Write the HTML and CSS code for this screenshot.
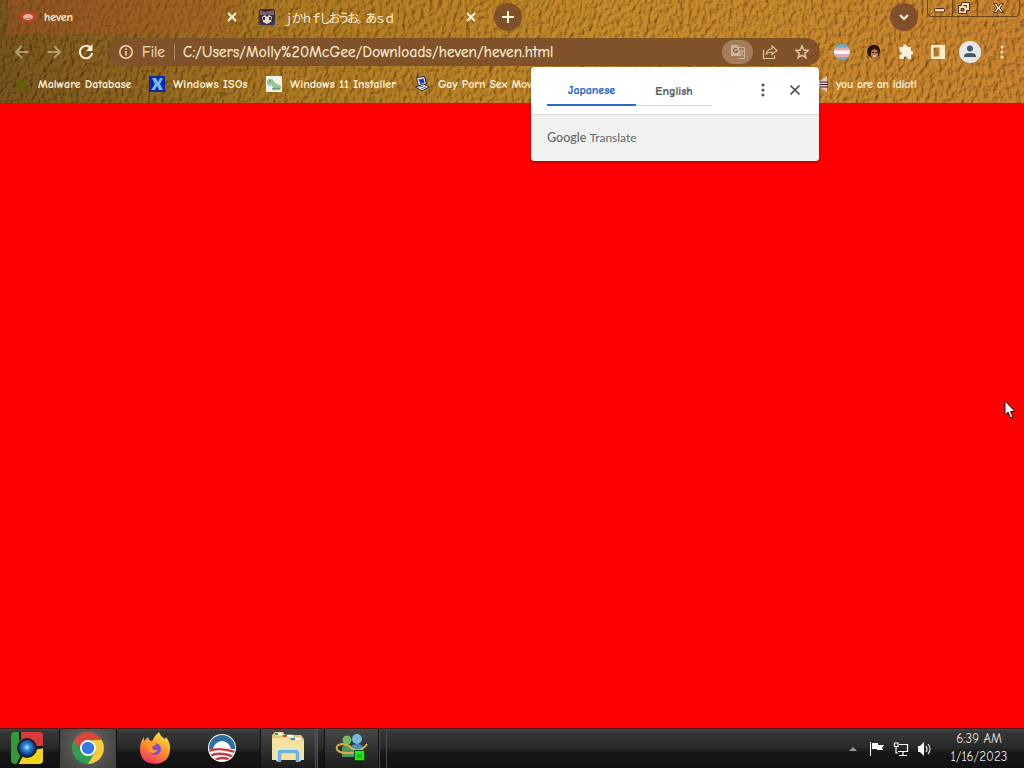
FILE: index.html
```html
<!DOCTYPE html>
<html lang="en">
<head>
    <meta charset="UTF-8">
    <title>heven</title>
    <link rel="stylesheet" href="styles.css">
</head>
<body>
    <div class="desktop">
        <header class="chrome">
            <!-- leather theme -->
            <svg class="leather" width="1024" height="103">
                <defs>
                    <filter id="leather" x="0" y="0" width="100%" height="100%" color-interpolation-filters="sRGB">
                        <feTurbulence type="fractalNoise" baseFrequency="0.22 0.17" numOctaves="3" seed="11" result="noise"/>
                        <feDiffuseLighting in="noise" surfaceScale="1.5" diffuseConstant="1.08" lighting-color="#fff" result="light">
                            <feDistantLight azimuth="215" elevation="62"/>
                        </feDiffuseLighting>
                        <feBlend in="SourceGraphic" in2="light" mode="multiply"/>
                    </filter>
                    <linearGradient id="tan">
                        <stop offset="0" stop-color="#7a551c"/>
                        <stop offset="0.12" stop-color="#8f6420"/>
                        <stop offset="0.28" stop-color="#b07a22"/>
                        <stop offset="0.6" stop-color="#c88c2b"/>
                        <stop offset="1" stop-color="#cc862f"/>
                    </linearGradient>
                </defs>
                <rect width="1024" height="103" fill="url(#tan)" filter="url(#leather)"/>
            </svg>

            <div class="tabs">
                <div class="tab active">
                    <svg class="favicon" viewBox="0 0 16 16"><path d="M0 8q1-5 8-5t8 5q-1 5-8 5T0 8z" fill="#c83e28"/><ellipse cx="8" cy="8" rx="5" ry="3" fill="#dcb9a0"/><path d="M5 10q3-2 6 0" fill="none" stroke="#a8705c"/></svg>
                    <span class="tab-title heven">heven</span>
                    <svg class="close" viewBox="0 0 10 10"><path d="M1 1l8 8M9 1l-8 8"/></svg>
                </div>
                <div class="tab">
                    <svg class="favicon" viewBox="0 0 16 16"><rect width="16" height="16" rx="2" fill="#3c2b3b"/><path d="M1 1l4 2 6-1 4-1v5H1z" fill="#76636c"/><path d="M3 8l3-2 2 2 2-2 3 2-1 5-4 2-4-2z" fill="#ead8d5"/><path d="M4 8h2v3H4zM10 8h2v3h-2z" fill="#283052"/><path d="M7 5l1 3 1-4" fill="#4c3643"/><path d="M0 11l4 5H0M16 11l-4 5h4" fill="#37406b"/></svg>
                    <span class="tab-title jp">ｊかｈｆしおうお。あｓｄ</span>
                    <svg class="close" viewBox="0 0 10 10"><path d="M1 1l8 8M9 1l-8 8"/></svg>
                </div>
                <div class="round new-tab"><svg width="12" height="12"><path d="M6 0v12M0 6h12" stroke="#fff4e0" stroke-width="2"/></svg></div>
                <div class="round tab-search"><svg width="10" height="7"><path d="M1 1l4 4 4-4" fill="none" stroke="#fff4e0" stroke-width="2"/></svg></div>
                <div class="window-buttons">
                    <svg width="97" height="17">
                        <path d="M.5 0v13q0 3.500 3.500 3.500h85q3.500 0 3.500-3.500V0M25.500 0v16M50.500 0v16" fill="none" stroke="#6d4218"/>
                        <rect x="7.500" y="8.500" width="10" height="3.500" rx="1" fill="#ffd9b0" stroke="#4c3024"/>
                        <path d="M34.500 2.500h8v8h-3v3h-8v-8h3z" fill="#ffe1b6" stroke="#4c3024"/>
                        <path d="M36.500 5.500h3v2M34 8.500h3v2.500h-3z" fill="#b77b32" stroke="#4c3024"/>
                        <path d="M66.500 3.500h3l2 3 2-3h3l-3.500 4.500 3.500 4.500h-3l-2-3-2 3h-3L70 8z" fill="#ffe1b6" stroke="#4c3024"/>
                    </svg>
                </div>
            </div>

            <div class="toolbar">
                <svg class="nav dim" viewBox="0 0 16 16"><path d="M14.500 8H2.500M8 2L2 8l6 6"/></svg>
                <svg class="nav dim" viewBox="0 0 16 16"><path d="M1.500 8h12M8 2l6 6-6 6"/></svg>
                <svg class="nav" viewBox="0 0 16 16"><path d="M12.500 3.700A6.200 6.200 0 1 0 14.200 9"/><path d="M14.500 0v7H8z" fill="#fff1d8" stroke="none"/></svg>
                <div class="address">
                    <svg class="info" viewBox="0 0 14 14"><circle cx="7" cy="7" r="6.200" fill="none" stroke="#f1d8b6" stroke-width="1.500"/><path d="M7 6v4.500M7 3.300v1.600" stroke="#f1d8b6" stroke-width="1.600"/></svg>
                    <span class="scheme">File</span>
                    <span class="url">C:/Users/Molly%20McGee/Downloads/heven/heven.html</span>
                    <span class="translate-icon">
                        <svg width="16" height="16" viewBox="0 0 16 16"><path d="M6.500 3.500h8v11h-6" fill="none" stroke="#c9b49a"/><path d="M1 1h7l3 11H1z" fill="#c9b49a"/><path d="M7 5a2 2 0 1 0 .5 2H5.500" fill="none" stroke="#84644b" stroke-width="1.200"/><path d="M9.500 7h4M11.500 6v1M13 7q-1 3-3 4M10.500 8.500q1 2 3 3" fill="none" stroke="#c9b49a"/></svg>
                    </span>
                    <svg class="share" viewBox="0 0 16 16"><path d="M1.500 5.500v9h11v-3" fill="none"/><path d="M4 10.500q1-5.500 6-5.500V2l5 4.500-5 4V8q-4 0-6 2.500z" fill="none"/></svg>
                    <svg class="star" viewBox="0 0 16 16"><path d="M8 2l1.800 4 4.300.4-3.300 2.900 1 4.300L8 11.300l-3.800 2.300 1-4.300-3.300-2.900L6.200 6z" fill="none"/></svg>
                </div>
                <div class="extensions">
                    <svg viewBox="0 0 16 16"><defs><clipPath id="ball"><circle cx="8" cy="8" r="8"/></clipPath></defs><g clip-path="url(#ball)"><rect width="16" height="16" fill="#63b0d0"/><rect y="3.500" width="16" height="9.500" fill="#e8a6ae"/><rect y="6.500" width="16" height="3.500" fill="#fff"/></g></svg>
                    <svg viewBox="0 0 16 16"><path d="M2 11Q0 6 3 3t6-2q5 1 5 6l-1 5-3 2H6z" fill="#26120d"/><ellipse cx="8.500" cy="10" rx="3.700" ry="5" fill="#bd7450"/><path d="M5 7q2-3 7-1l-1-3H6z" fill="#331913"/><path d="M6 8.500h2M9.500 8.500h2" stroke="#321811"/><path d="M7 12h3" stroke="#fff0e0" stroke-width="1.200"/></svg>
                    <svg viewBox="0 0 16 16"><path d="M1.500 3H5v-.5a2 2 0 0 1 4 0V3h4v4h.5a1.800 1.800 0 0 1 0 3.600H13V15H9.500v-.5a2 2 0 0 0-4 0v.5h-4v-4H2a1.800 1.800 0 0 0 0-3.600h-.5z" fill="#fff0df"/></svg>
                    <svg viewBox="0 0 16 16"><path d="M1 1h14v14H1zM3.500 3.500v9h6v-9z" fill="#ffebc8" fill-rule="evenodd"/></svg>
                    <svg class="avatar" viewBox="0 0 22 22"><circle cx="11" cy="11" r="11" fill="#e5e7e8"/><circle cx="11" cy="7.500" r="3" fill="#44556d"/><path d="M5 16v-1q0-3 6-3t6 3v1z" fill="#44556d"/></svg>
                    <svg viewBox="0 0 16 16"><g fill="#ffe4b8"><circle cx="8" cy="3" r="1.500"/><circle cx="8" cy="8" r="1.500"/><circle cx="8" cy="13" r="1.500"/></g></svg>
                </div>
            </div>

            <div class="bookmarks">
                <div class="bookmark malware">
                    <svg viewBox="0 0 16 16"><path d="M8 2l2 4 4-1-2 4 3 5H1l2-5-1-4 4 1z" fill="#5d6209" opacity=".75"/></svg>
                    <span>Malware Database</span>
                </div>
                <div class="bookmark isos">
                    <svg viewBox="0 0 16 16"><rect width="16" height="16" fill="#0929a6"/><path d="M3 2h4l2 4 2-4h3l-3 6 3 6h-4L8 10l-2 4H2l4-6z" fill="#74b5f5"/></svg>
                    <span>Windows ISOs</span>
                </div>
                <div class="bookmark installer">
                    <svg viewBox="0 0 16 16"><rect width="16" height="16" fill="#eff1e6"/><path d="M1 5q3-4 6-1l2 3 4 2q3 1 2 4H6q2-2-1-4l-4-1z" fill="#9cc293"/><path d="M3 5h2M6 13h8" stroke="#39794f"/><path d="M1 8h4v2H2" fill="#b3cbe0"/></svg>
                    <span>Windows 11 Installer</span>
                </div>
                <div class="bookmark movies">
                    <svg viewBox="0 0 16 16"><path d="M2.500 1.500l8-1 2 7-8 3z" fill="#e9e7db" stroke="#25253a"/><path d="M4.500 3.500l5-1 1 4-4 1.500z" fill="#163bc1"/><path d="M1.500 11l8-3 5.500 3-7 4z" fill="#eeecdf" stroke="#25253a"/><path d="M4.500 11l5-1M7 13l5-2" stroke="#656579"/></svg>
                    <span>Gay Porn Sex Mov</span>
                </div>
                <div class="bookmark idiot">
                    <svg viewBox="0 0 16 16"><path d="M4 6l5-2 6-4v16l-6-4-5-2z" fill="#e9c7bb"/><path d="M8 6h8M8 8.500h8M8 11h8" stroke="#35213f" stroke-width="1.200"/></svg>
                    <span>you are an idiot!</span>
                </div>
            </div>
        </header>

        <main class="page"></main>

        <footer class="taskbar">
            <div class="task chrome-old">
                <svg width="34" height="34" viewBox="0 0 34 34">
                    <defs><radialGradient id="orb" cy=".45"><stop offset="0" stop-color="#b5ecff"/><stop offset=".4" stop-color="#338cde"/><stop offset="1" stop-color="#08378a"/></radialGradient><clipPath id="square"><rect x="1" y="1" width="32" height="32" rx="4"/></clipPath></defs>
                    <g clip-path="url(#square)"><path d="M0 0h12l5 17-9 17H0z" fill="#319b3c"/><path d="M10 0h24v16H17L10 9z" fill="#dc3939"/><path d="M8 34l7-13 19-4v17z" fill="#f4d31f"/><path d="M10 0v9M22 16h12M13 22L7 34" stroke="#151515" stroke-width="2"/></g><circle cx="17" cy="17" r="10" fill="#1b2025"/><circle cx="17" cy="17" r="8" fill="url(#orb)"/>
                </svg>
            </div>
            <div class="task running current">
                <svg width="32" height="32" viewBox="0 0 32 32"><circle cx="16" cy="16" r="16" fill="#2f9e50"/><path d="M2.200 8A16 16 0 0 1 29.800 8H16a8 8 0 0 0-7 12z" fill="#dd453c"/><path d="M29.800 8A16 16 0 0 1 16 32l7-12q2-6-3-12z" fill="#f8cc3d"/><circle cx="16" cy="16" r="8" fill="#fff"/><circle cx="16" cy="16" r="6.200" fill="#3978e7"/></svg>
            </div>
            <div class="task firefox">
                <svg width="32" height="32" viewBox="0 0 32 32"><defs><linearGradient id="fire" x1=".8" y1="0" x2=".3" y2="1"><stop offset="0" stop-color="#ffe84d"/><stop offset=".45" stop-color="#ff9b27"/><stop offset="1" stop-color="#f2335e"/></linearGradient></defs><path d="M20 0q2 5 6 7l1-2q5 6 4 13-1 13-15 14Q1 31 1 17 1 10 5 5v4l4-4q1 4 4 4 3-6 7-9z" fill="url(#fire)"/><circle cx="16" cy="17" r="6" fill="#854bd0"/><path d="M7 11q6-3 11 1l-5 3q1 4 6 3-3 5-9 2z" fill="#ff9827"/></svg>
            </div>
            <div class="task obama">
                <svg width="28" height="28" viewBox="0 0 28 28"><defs><clipPath id="disc"><circle cx="14" cy="14" r="13"/></clipPath></defs><circle cx="14" cy="14" r="14" fill="#f2f4f6"/><g clip-path="url(#disc)"><path d="M0 0h28v16h-5a9 9 0 0 0-18 0H0z" fill="#2e6d9f"/><circle cx="14" cy="14" r="6.500" fill="#fff"/><path d="M0 15h28v13H0z" fill="#fff"/><path d="M1 17q10-4 26 1M2 22q10-5 24 1M7 26q7-4 16 0" fill="none" stroke="#c9383a" stroke-width="2.300"/></g></svg>
            </div>
            <div class="task running explorer">
                <svg width="34" height="32" viewBox="0 0 34 32"><path d="M1 3l3-3h8l2 3h16l3 4v20H1z" fill="#e6c977"/><path d="M4 2h7M13 4h9M20 7h10" stroke="#fff" stroke-width="2.500"/><path d="M4 2h3" stroke="#25a64d" stroke-width="2"/><path d="M12 4h4" stroke="#d44536" stroke-width="2"/><path d="M20 7h4" stroke="#348fd0" stroke-width="2"/><path d="M1 6h16l3 3h13v19H1z" fill="#f3e39f"/><path d="M8 30v-8q0-3 3-3h13q3 0 3 3v8" fill="none" stroke="#72b3de" stroke-width="4.500"/><path d="M6 29v-9q0-3 4-3h14q5 0 5 4v8" fill="none" stroke="#d4f2ff" stroke-width="1.300"/></svg>
            </div>
            <div class="task running messenger">
                <svg width="34" height="30" viewBox="0 0 34 30"><circle cx="12" cy="7" r="4.500" fill="#75b963"/><path d="M7 24V15q1-4 5-4t5 4v9z" fill="#4f9855"/><circle cx="22" cy="6" r="5" fill="#76b7dd"/><path d="M16 24V14q1-3 6-3t6 3v10z" fill="#478dc2"/><path d="M2 13q6-5 16 3 8 4 14-5M2 13q-2 6 8 7h9" fill="none" stroke="#dcae44" stroke-width="2"/><path d="M19.500 17.500h10v10h-10z" fill="#26e817" stroke="#12520c"/><path d="M22 22h5M22 24h5" stroke="#168d14"/></svg>
            </div>
            <div class="task-end"></div>
            <div class="tray">
                <svg class="arrow" width="8" height="5"><path d="M0 5l4-4 4 4z" fill="#999"/></svg>
                <svg width="16" height="16" viewBox="0 0 16 16"><path d="M1.500 1v14" stroke="#fff"/><path d="M3 2h6v2h6l-2 3 1 2H8V8H3z" fill="#fff"/></svg>
                <svg width="16" height="16" viewBox="0 0 16 16"><path d="M6 3.500h8.500v7H5M10 11v3M6 14.500h8M3 6v6h2M1.500 2h3.500v3.500H1.500z" fill="none" stroke="#fff" stroke-width="1.200"/></svg>
                <svg width="16" height="16" viewBox="0 0 16 16"><path d="M1 5h2l4-4v14l-4-4H1z" fill="#fff"/><path d="M9 5q2 3 0 6M11 3q4 5 0 10" fill="none" stroke="#e5e5e5" stroke-width="1.200"/></svg>
                <div class="clock"><span class="time">6:39 AM</span><span class="date">1/16/2023</span></div>
            </div>
        </footer>

        <div class="popup">
            <div class="popup-top">
                <div class="lang selected"><span>Japanese</span></div>
                <div class="lang"><span>English</span></div>
                <svg class="more" width="4" height="14"><g fill="#56595e"><circle cx="2" cy="2" r="1.600"/><circle cx="2" cy="7" r="1.600"/><circle cx="2" cy="12" r="1.600"/></g></svg>
                <svg width="10" height="10"><path d="M.5.5l9 9M9.500.5l-9 9" stroke="#4e5156" stroke-width="1.600"/></svg>
            </div>
            <div class="popup-bottom"><b>Google</b><span>Translate</span></div>
        </div>

        <svg class="cursor" width="12" height="19" viewBox="0 0 12 19"><path d="M1 1v14l3-3 2.500 6L9 17l-2.500-5.500H11z" fill="#fff" stroke="#111"/></svg>
    </div>
</body>
</html>
```
FILE: styles.css
```css
:root {
    --cream: #fff1d8;
    --field: #80522a;
    --ui: "Comic Sans MS", "Comic Neue", "Open Sans", sans-serif;
}

* {
    box-sizing: border-box;
}

body {
    margin: 0;
    font-family: var(--ui);
    overflow: hidden;
}

svg {
    display: block;
    flex: none;
}

.desktop {
    position: relative;
    width: 1024px;
    height: 768px;
    display: flex;
    flex-direction: column;
    overflow: hidden;
}

.chrome {
    position: relative;
    height: 103px;
    flex: none;
    color: var(--cream);
}

.leather {
    position: absolute;
    z-index: -1;
}

.tabs {
    display: flex;
    height: 34px;
    padding-left: 8px;
}

.tab {
    display: flex;
    align-items: center;
    width: 239px;
    padding: 0 10px 0 12px;
    font-size: 12px;
    font-weight: 600;
}

.tab + .tab {
    width: 240px;
}

.tab.active {
    background: linear-gradient(90deg, rgba(169, 82, 37, 0.4) 85%, rgba(169, 82, 37, 0));
}

.favicon {
    width: 16px;
    height: 16px;
    margin-right: 8px;
}

.tab-title {
    flex: 1;
    white-space: nowrap;
}

.heven {
    letter-spacing: -0.1px;
}

.jp {
    font-family: "Noto Sans CJK JP", sans-serif;
    font-weight: 400;
    font-size: 12px;
    letter-spacing: -2.8px;
}

.close {
    width: 10px;
    height: 10px;
    stroke: #fff4e0;
    stroke-width: 1.8;
}

.round {
    display: flex;
    align-items: center;
    justify-content: center;
    width: 28px;
    height: 28px;
    margin-top: 3px;
    border-radius: 50%;
    background: #80502a;
}

.new-tab {
    margin-left: 8px;
}

.tab-search {
    margin-left: 368px;
}

.window-buttons {
    margin-left: 9px;
}

.toolbar {
    display: flex;
    align-items: center;
    height: 36px;
    padding-left: 14px;
}

.nav {
    width: 16px;
    height: 16px;
    margin-right: 16px;
    fill: none;
    stroke: var(--cream);
    stroke-width: 2;
}

.dim {
    opacity: 0.45;
}

.address {
    display: flex;
    align-items: center;
    width: 711px;
    height: 28px;
    margin-left: -1px;
    padding: 0 10px;
    border-radius: 14px;
    background: var(--field);
    font-size: 15px;
    -webkit-text-stroke: 0.25px currentColor;
}

.info {
    width: 14px;
    height: 14px;
    margin-right: 9px;
}

.scheme {
    width: 32px;
    color: #f1d8b6;
}

.url {
    flex: 1;
    height: 16px;
    line-height: 17px;
    padding-left: 8px;
    border-left: 1px solid #ae8660;
    letter-spacing: 0.2px;
    white-space: nowrap;
}

.translate-icon {
    display: flex;
    align-items: center;
    justify-content: center;
    width: 31px;
    height: 24px;
    border-radius: 12px;
    background: #a47e58;
}

.share, .star {
    width: 16px;
    height: 16px;
    margin-left: 9px;
    stroke: #dcc0a0;
    stroke-width: 1.2;
}

.star {
    margin-left: 16px;
    stroke-width: 1.6;
}

.extensions {
    display: flex;
    align-items: center;
    gap: 16px;
    margin-left: 14px;
}

.extensions svg {
    width: 16px;
    height: 16px;
}

.extensions .avatar {
    width: 22px;
    height: 22px;
    margin: 0 -3px;
}

.bookmarks {
    display: flex;
    align-items: center;
    height: 28px;
    padding-left: 14px;
    font-size: 12px;
    font-weight: 600;
    white-space: nowrap;
}

.bookmark {
    display: flex;
    align-items: center;
    gap: 8px;
    flex: none;
}

.bookmark svg {
    width: 16px;
    height: 16px;
}

.malware { width: 135px; }
.isos { width: 117px; letter-spacing: 0.15px; }
.installer { width: 148px; letter-spacing: 0.05px; }
.movies { width: 398px; letter-spacing: -0.15px; }
.idiot { letter-spacing: -0.25px; }

.page {
    flex: 1;
    background: #f00;
}

.taskbar {
    display: flex;
    height: 40px;
    border-top: 1px solid #561515;
    background: linear-gradient(#454545 0, #353635 3px, #292a2a 18px, #171717 24px, #111 100%);
}

.task {
    display: flex;
    align-items: center;
    justify-content: center;
    width: 54px;
    padding-bottom: 2px;
}

.chrome-old { margin-right: 5px; }
.firefox { width: 76px; }
.obama { width: 58px; margin-right: 9px; }

.running {
    width: 58px;
    border-left: 1px solid #111;
    border-right: 1px solid #111;
    background: linear-gradient(#484848, #303030 55%, #1b1b1b);
}

.current {
    background: radial-gradient(circle at 50% 40%, #6c6b66, #464643 80%);
}

.explorer {
    margin-right: 6px;
    border-right: 3px double #555;
}

.messenger {
    width: 55px;
}

.task-end {
    width: 8px;
    border-left: 1px solid #4b4b4b;
    border-right: 1px solid #4b4b4b;
}

.tray {
    display: flex;
    align-items: center;
    gap: 8px;
    margin-left: auto;
    color: #e4e4e4;
}

.arrow {
    margin-right: 4px;
}

.clock {
    display: flex;
    flex-direction: column;
    align-items: center;
    width: 76px;
    margin-right: 7px;
    padding-bottom: 2px;
    font-size: 13px;
    line-height: 18px;
}

.popup {
    position: absolute;
    left: 531px;
    top: 67px;
    width: 288px;
    height: 94px;
    border-radius: 4px;
    overflow: hidden;
    background: #fff;
    box-shadow: 0 1px 3px rgba(60, 20, 0, 0.6);
}

.popup-top {
    display: flex;
    align-items: center;
    height: 48px;
    padding: 0 19px 2px 16px;
    border-bottom: 1px solid #d9dadb;
}

.lang {
    display: flex;
    align-items: center;
    justify-content: center;
    align-self: flex-start;
    width: 76px;
    height: 39px;
    padding-top: 9px;
    border-bottom: 1px solid #d9dadb;
    color: #56595e;
    font-size: 12px;
    font-weight: 700;
    -webkit-text-stroke: 0.2px currentColor;
}

.lang.selected {
    width: 89px;
    border-bottom: 2px solid #2d69cd;
    color: #2469ce;
}

.more {
    margin-left: auto;
    margin-right: 25px;
}

.popup-bottom {
    display: flex;
    align-items: center;
    gap: 3px;
    height: 46px;
    padding: 0 0 1px 16px;
    background: #f1f1f1;
    color: #65686c;
    font: 12px Lato, sans-serif;
}

.popup-bottom b {
    font-size: 12.5px;
    font-weight: 500;
}

.cursor {
    position: absolute;
    left: 1004px;
    top: 400px;
}
```
